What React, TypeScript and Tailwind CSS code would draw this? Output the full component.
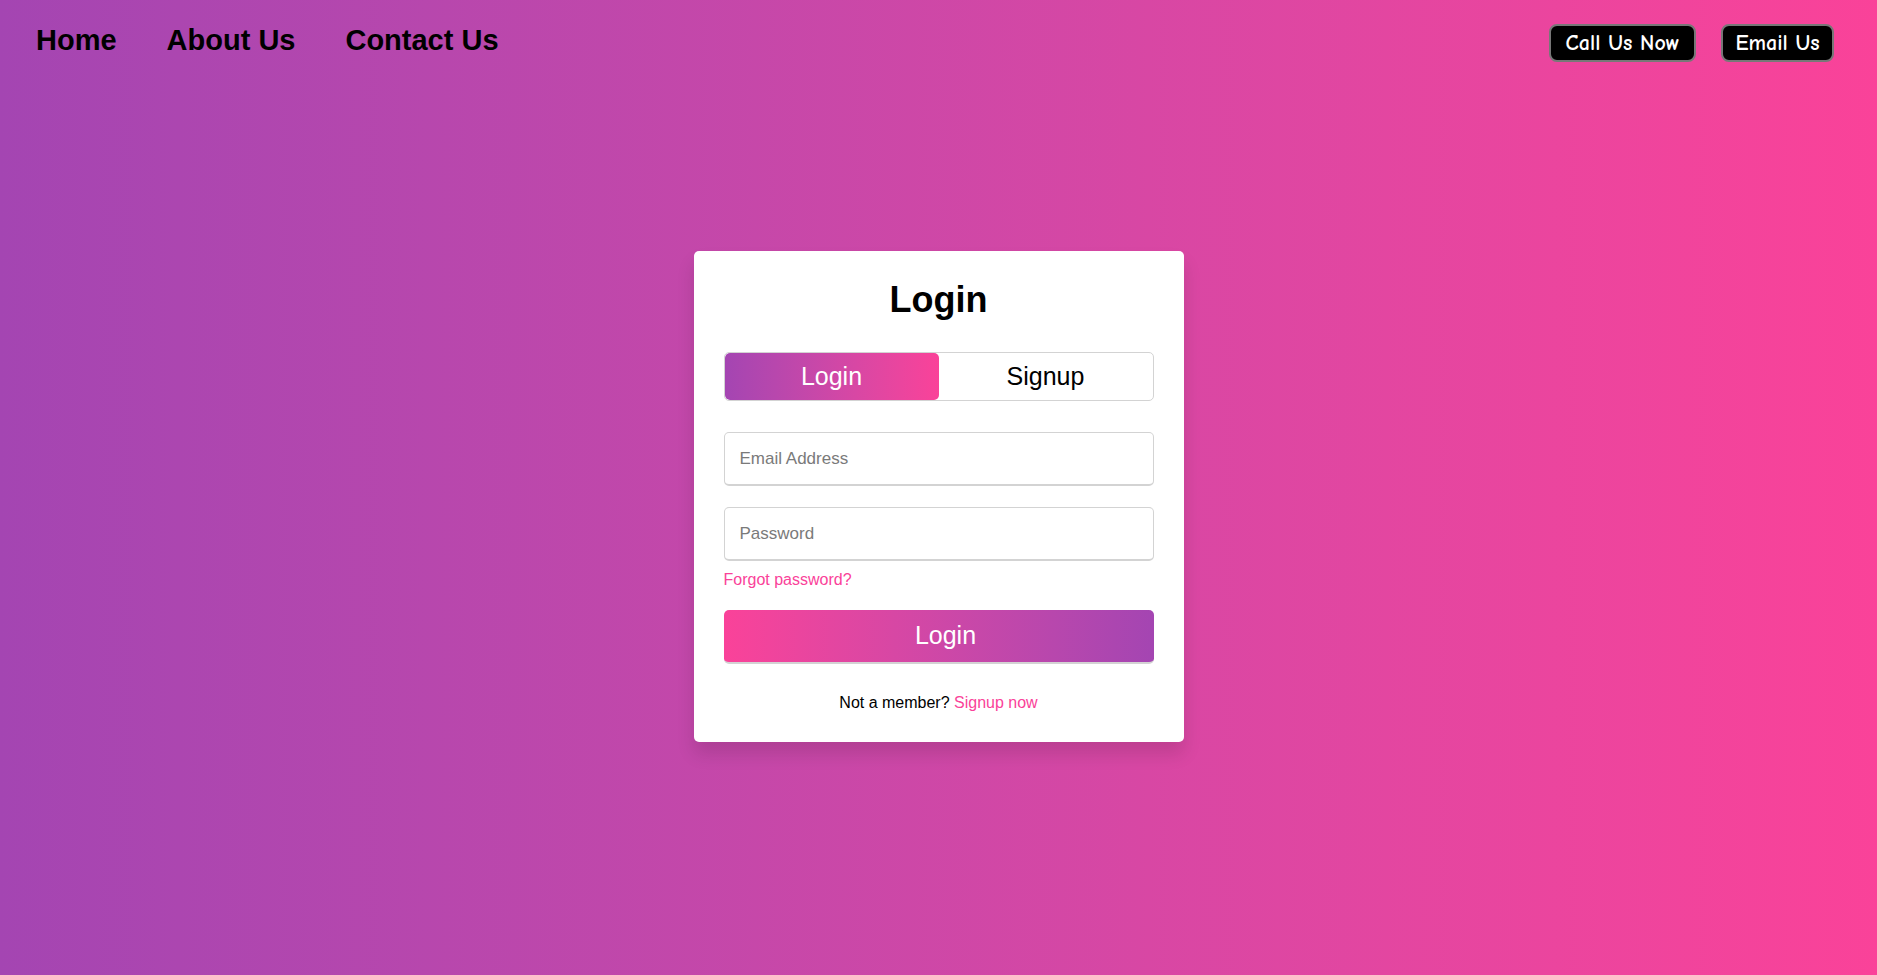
import React, { useState } from "react";

const comic = { fontFamily: '"Comic Sans MS", "Comic Neue", cursive' };

function NavBar() {
  return (
    <header className="flex items-center justify-between h-[82px] pl-[36px] pr-[43px]">
      <nav className="flex items-center gap-[50px] text-[29px] font-bold text-black">
        <a href="#">Home</a>
        <a href="#">About Us</a>
        <a href="#">Contact Us</a>
      </nav>
      <div className="flex items-center gap-[25px] pt-[4px]">
        <button
          className="h-[38px] w-[147px] rounded-[8px] border-2 border-[#777] bg-black text-white text-[22px] font-semibold"
          style={comic}
        >
          Call Us Now
        </button>
        <button
          className="h-[38px] w-[113px] rounded-[8px] border-2 border-[#777] bg-black text-white text-[22px] font-semibold"
          style={comic}
        >
          Email Us
        </button>
      </div>
    </header>
  );
}

function LoginCard() {
  const [tab, setTab] = useState<"login" | "signup">("login");

  return (
    <div className="w-[490px] bg-white rounded-[5px] px-[30px] pt-[24px] pb-[27px] shadow-[0_12px_18px_rgba(0,0,0,0.12)]">
      <h1 className="text-center text-[36px] font-bold leading-[50px] text-black">Login</h1>

      <div className="mt-[27px] flex h-[49px] rounded-[5px] border border-[#d3d3d3] overflow-hidden">
        <button
          onClick={() => setTab("login")}
          className={`flex-1 text-[25px] rounded-[5px] ${
            tab === "login" ? "bg-linear-to-r from-[#a445b2] to-[#fa4299] text-white" : "text-black"
          }`}
        >
          Login
        </button>
        <button
          onClick={() => setTab("signup")}
          className={`flex-1 text-[25px] rounded-[5px] ${
            tab === "signup" ? "bg-linear-to-r from-[#a445b2] to-[#fa4299] text-white" : "text-black"
          }`}
        >
          Signup
        </button>
      </div>

      <input
        type="text"
        placeholder="Email Address"
        className="mt-[31px] block w-full h-[54px] rounded-[5px] border border-[#d3d3d3] border-b-2 px-[15px] text-[17px] text-black placeholder:text-[#7a7a7a] outline-none"
      />
      <input
        type="password"
        placeholder="Password"
        className="mt-[21px] block w-full h-[54px] rounded-[5px] border border-[#d3d3d3] border-b-2 px-[15px] text-[17px] text-black placeholder:text-[#7a7a7a] outline-none"
      />

      <div className="mt-[8px] leading-[22px]">
        <a href="#" className="text-[16px] text-[#fa4299]">Forgot password?</a>
      </div>

      <button className="mt-[19px] block w-full h-[54px] rounded-[5px] border-b-2 border-[#d3d3d3] bg-linear-to-r from-[#fa4299] to-[#a445b2] text-white text-[25px] pl-[14px]">
        Login
      </button>

      <p className="mt-[27px] text-center text-[16px] leading-[24px] text-black">
        Not a member? <a href="#" className="text-[#fa4299]">Signup now</a>
      </p>
    </div>
  );
}

export default function App() {
  return (
    <div
      className="min-h-screen w-full bg-linear-to-r from-[#a445b2] to-[#fa4299]"
      style={{ fontFamily: '"Liberation Sans", Arial, sans-serif' }}
    >
      <NavBar />
      <main className="flex justify-center pt-[169px] pb-[40px]">
        <LoginCard />
      </main>
    </div>
  );
}
